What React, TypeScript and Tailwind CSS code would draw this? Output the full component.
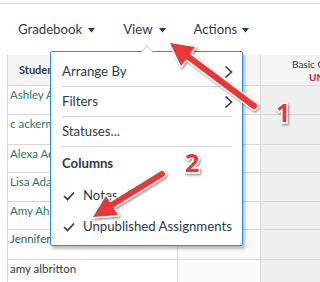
import React from 'react'

const rows = [
  { name: 'Ashley Abbott', h: 'h-[29px]', color: 'text-[#2b7a63]' },
  { name: 'c ackerman', h: 'h-[30px]', color: 'text-[#2b7a63]' },
  { name: 'Alexa Acosta', h: 'h-[28px]', color: 'text-[#2b7a63]' },
  { name: 'Lisa Adams', h: 'h-[29px]', color: 'text-[#2b7a63]' },
  { name: 'Amy Ahrens', h: 'h-[28px]', color: 'text-[#2b7a63]' },
  { name: 'Jennifer Aitken', h: 'h-[30px]', color: 'text-[#2d5f55]' },
  { name: 'amy albritton', h: 'h-[29px]', color: 'text-[#2f3e3a]' },
]

function Caret() {
  return (
    <svg width="7" height="5" viewBox="0 0 7 5" className="mt-[2px]">
      <path d="M0 0h7L3.5 4.5z" fill="#2d3b45" />
    </svg>
  )
}

function Chevron() {
  return (
    <svg width="9" height="14" viewBox="0 0 9 14" className="mr-[9px]">
      <path d="M1.5 1.5L7.5 7l-6 5.5" fill="none" stroke="#2d3b45" strokeWidth="1.6" />
    </svg>
  )
}

function Check() {
  return (
    <svg width="12" height="10" viewBox="0 0 12 10" className="ml-[1px] mr-[8px]">
      <path d="M1 5l3.5 3.5L11 1.5" fill="none" stroke="#2d3b45" strokeWidth="1.6" />
    </svg>
  )
}

function ViewMenu() {
  return (
    <div className="absolute left-[50px] top-[51px] w-[193px] h-[195px] bg-white border border-[#2a8fe2] rounded-[2px] shadow-[2px_3px_3px_rgba(0,0,0,0.25)] pt-[5px] text-[13.2px] text-[#2d3b45]">
      {/* notch */}
      <div className="absolute left-[92px] -top-[5px] w-[8px] h-[8px] bg-white border-l border-t border-[#d0d0d0] rotate-45" />
      <div className="h-[29px] flex items-center justify-between pl-[11px]">
        <span>Arrange By</span>
        <Chevron />
      </div>
      <div className="ml-[11px] mr-[10px] h-px bg-[#d5d5d5]" />
      <div className="h-[29px] flex items-center justify-between pl-[11px]">
        <span>Filters</span>
        <Chevron />
      </div>
      <div className="ml-[11px] mr-[10px] h-px bg-[#d5d5d5]" />
      <div className="h-[29px] flex items-center pl-[11px]">Statuses...</div>
      <div className="ml-[11px] mr-[10px] h-px bg-[#d5d5d5]" />
      <div className="h-[33px] flex items-center pl-[11px] font-bold">Columns</div>
      <div className="h-[31px] flex items-center pl-[11px]">
        <Check />
        <span>Notes</span>
      </div>
      <div className="h-[31px] flex items-center pl-[11px]">
        <Check />
        <span>Unpublished Assignments</span>
      </div>
    </div>
  )
}

function Annotations() {
  return (
    <svg width="320" height="282" className="absolute inset-0 pointer-events-none">
      <defs>
        <filter id="sh" x="-20%" y="-20%" width="140%" height="140%">
          <feDropShadow dx="1" dy="1.5" stdDeviation="1.2" floodColor="#000" floodOpacity="0.45" />
        </filter>
      </defs>
      <g filter="url(#sh)">
        <line x1="254" y1="106" x2="186" y2="55" stroke="#fff" strokeWidth="9" strokeLinecap="round" />
        <polygon points="170,43 195,47 181,66" fill="#fff" stroke="#fff" strokeWidth="3" strokeLinejoin="round" />
        <line x1="254" y1="106" x2="186" y2="55" stroke="#ec3434" strokeWidth="6" strokeLinecap="round" />
        <polygon points="170,43 195,47 181,66" fill="#ec3434" />
      </g>
      <g filter="url(#sh)">
        <line x1="162" y1="174" x2="110" y2="206" stroke="#fff" strokeWidth="9" strokeLinecap="round" />
        <polygon points="93,217 106,196 118,215" fill="#fff" stroke="#fff" strokeWidth="3" strokeLinejoin="round" />
        <line x1="162" y1="174" x2="110" y2="206" stroke="#ec3434" strokeWidth="6" strokeLinecap="round" />
        <polygon points="93,217 106,196 118,215" fill="#ec3434" />
      </g>
      <g filter="url(#sh)" fontFamily="'Open Sans', 'Liberation Sans', sans-serif" fontWeight="700" fontSize="25">
        <text x="276" y="122" fill="#ec3434" stroke="#fff" strokeWidth="3" paintOrder="stroke">1</text>
        <text x="185" y="172" fill="#ec3434" stroke="#fff" strokeWidth="3" paintOrder="stroke">2</text>
      </g>
    </svg>
  )
}

export default function App() {
  return (
    <div className="relative w-[320px] h-[282px] overflow-hidden bg-white font-['Lato','Open_Sans',sans-serif] text-[#2d3b45]">
      <div className="pt-[3px]">
        <div className="border-t border-[#dcdcdc]" />
      </div>

      {/* toolbar */}
      <div className="h-[51px] flex items-center text-[13.2px]">
        <div className="ml-[18px] flex items-center gap-[6px]">
          Gradebook
          <Caret />
        </div>
        <div className="ml-[28px] flex items-center gap-[6px]">
          View
          <Caret />
        </div>
        <div className="ml-[28px] flex items-center gap-[5px]">
          Actions
          <Caret />
        </div>
      </div>

      {/* gradebook grid */}
      <div className="ml-[7px] border-l border-[#d8d8d8]">
        <div className="flex h-[31px] border-b border-[#d8d8d8] bg-[#f5f5f5]">
          <div className="w-[170px] shrink-0 border-r border-[#d8d8d8] flex items-center pl-[11px] text-[11px] font-bold text-[#2d3b45]">
            Student Name
          </div>
          <div className="w-[83px] shrink-0 border-r border-[#d8d8d8]" />
          <div className="flex-1 overflow-hidden whitespace-nowrap text-[10px] leading-[13px] pt-[3px]">
            <div className="pl-[31px] text-[#2d3b45]">Basic Concepts Quiz</div>
            <div className="pl-[48px] text-[#e0102c] font-bold">UNPUBLISHED</div>
          </div>
        </div>
        {rows.map((r) => (
          <div key={r.name} className={`flex ${r.h} border-b border-[#d8d8d8]`}>
            <div className={`w-[170px] shrink-0 border-r border-[#d8d8d8] pl-[2px] text-[11.5px] leading-[17px] ${r.color}`}>
              {r.name}
            </div>
            <div className="w-[83px] shrink-0 border-r border-[#d8d8d8] bg-[#fafafa]" />
            <div className="flex-1 bg-[#efefef]" />
          </div>
        ))}
      </div>

      <ViewMenu />
      <Annotations />
    </div>
  )
}
